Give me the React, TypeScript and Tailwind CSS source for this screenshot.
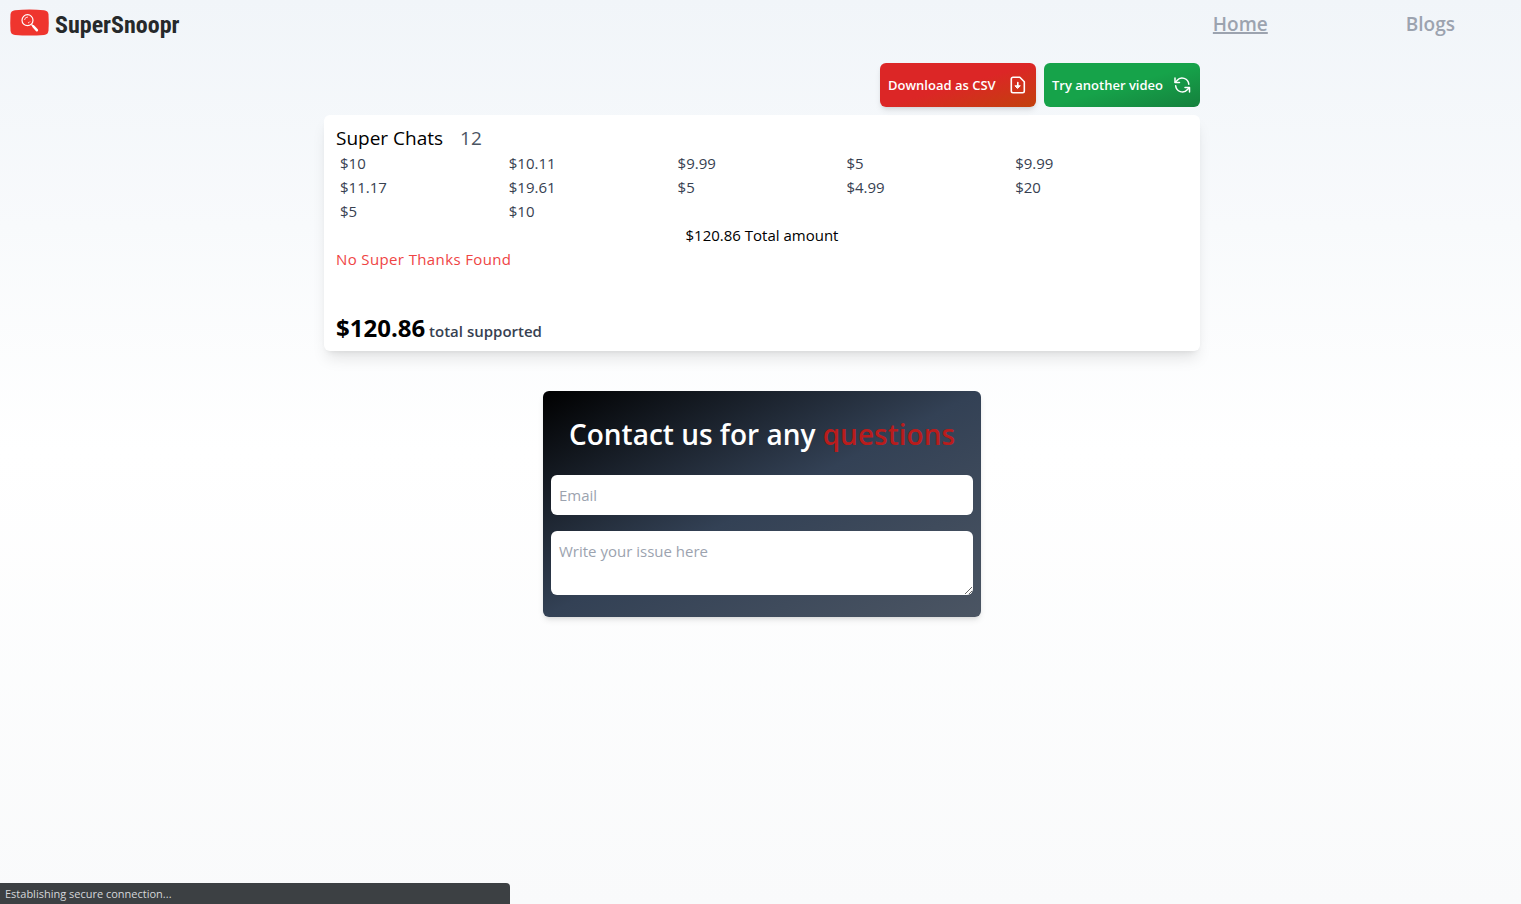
const superChats = ['$10', '$10.11', '$9.99', '$5', '$9.99', '$11.17', '$19.61', '$5', '$4.99', '$20', '$5', '$10'];

function Logo() {
  return (
    <a href="#" className="flex items-center gap-1.5">
      <svg width="39" height="36" viewBox="0 0 39 36" fill="none" aria-hidden="true">
        <path d="M5 4.2Q19.5 3 34 4.2Q38.2 4.6 38.5 8.5Q39 16.5 38.5 24.5Q38.2 28.5 34 29Q19.5 30 5 29Q.8 28.5 .5 24.5Q0 16.5 .5 8.5Q.8 4.6 5 4.2Z" fill="#ef352e" />
        <circle cx="17.5" cy="14.2" r="5.5" stroke="#fff" strokeWidth="1.2" />
        <path d="M14.5 14a3.5 3.5 0 0 1 3.5-3M20 15.5a3.5 3.5 0 0 1-2 1.5" stroke="#fff" strokeWidth=".8" />
        <path d="M21.5 18.5L23.5 20.5" stroke="#fff" strokeWidth="1.4" />
        <path d="M23.5 20.5L26.8 24.2" stroke="#fff" strokeWidth="2.6" strokeLinecap="round" />
      </svg>
      <span className="pt-0.5 font-['Roboto_Condensed','Lato',sans-serif] text-2xl font-bold text-[#26292b]">
        SuperSnoopr
      </span>
    </a>
  );
}

function DownloadIcon() {
  return (
    <svg width="20" height="20" viewBox="0 0 20 20" fill="none" stroke="currentColor" strokeWidth="1.6" strokeLinecap="round" strokeLinejoin="round" aria-hidden="true">
      <path d="M5 2.3h6.8L16.3 6.8V16a1.7 1.7 0 0 1-1.7 1.7H5A1.7 1.7 0 0 1 3.3 16V4A1.7 1.7 0 0 1 5 2.3z" />
      <path d="M9.8 7.5v4" />
      <path d="M7.3 10.8h5L9.8 13.3z" fill="currentColor" strokeWidth="1" />
    </svg>
  );
}

function RefreshIcon() {
  return (
    <svg width="20" height="20" viewBox="0 0 20 20" fill="none" stroke="currentColor" strokeWidth="1.5" strokeLinecap="round" strokeLinejoin="round" aria-hidden="true">
      <path d="M3 3v4.500h4.500" />
      <path d="M3.3 7.300L5 5.400A6.700 6.700 0 0 1 16.800 9.200" />
      <path d="M17.5 17v-4.500H13" />
      <path d="M17.2 12.700L15.500 14.600A6.700 6.700 0 0 1 3.700 10.800" />
    </svg>
  );
}

export default function App() {
  return (
    <div className="min-h-screen bg-linear-to-b/srgb from-[#f1f5f9] via-white to-[#f9fafb] font-['Open_Sans',sans-serif] text-[15px] leading-6 text-black">
      <header className="flex h-12 items-center justify-between pr-[66px] pl-2.5">
        <Logo />
        <nav className="flex gap-[138px] text-[19px] font-semibold text-[#9ca3af]">
          <a href="#" className="underline decoration-2">Home</a>
          <a href="#">Blogs</a>
        </nav>
      </header>

      <main className="mt-[15px] pl-[3px]">
        <div className="mx-auto w-full max-w-[876px]">
          <div className="mb-2 flex justify-end gap-2 text-[13px] font-semibold text-white">
            <button className="flex h-11 min-w-[156px] items-center justify-between gap-2 rounded-md bg-linear-to-br/srgb from-[#dc2626] via-[#dc2626] to-[#c2410c] px-2 shadow-md">
              Download as CSV
              <DownloadIcon />
            </button>
            <button className="flex h-11 min-w-[156px] items-center justify-between gap-2 rounded-md bg-linear-to-br/srgb from-[#16a34a] via-[#16a34a] to-[#15803d] px-2">
              Try another video
              <RefreshIcon />
            </button>
          </div>

          <section className="rounded-md bg-white px-3 pt-2 pb-[7px] shadow-lg">
            <h2 className="pt-0.5 text-[19px] leading-[26px] font-medium">
              Super Chats <span className="ml-3 font-normal text-[#4b5563]">12</span>
            </h2>
            <ul className="grid grid-cols-5 px-1 text-[#374151]">
              {superChats.map((amount, index) => (
                <li key={index}>{amount}</li>
              ))}
            </ul>
            <p className="text-center font-medium">$120.86 Total amount</p>
            <p className="tracking-wide text-[#ef4444]">No Super Thanks Found</p>
            <p className="mt-[41px] text-2xl font-bold">
              $120.86<span className="text-[15px] font-semibold text-[#374151]"> total supported</span>
            </p>
          </section>

          {/* Contact form */}
          <form className="mx-auto mt-10 w-1/2 rounded-md bg-linear-to-br/srgb from-black via-[#334155] to-[#4b5563] px-2 pt-[25px] pb-[22px] shadow-md">
            <h2 className="mb-[23px] text-center text-[28px] leading-9 font-semibold text-white">
              Contact us for any <span className="text-[#b91c1c]">questions</span>
            </h2>
            <input type="email" aria-label="Email" placeholder="Email" className="mb-4 block h-10 w-full rounded-md bg-white p-2 placeholder:text-[#9ca3af]" />
            <textarea aria-label="Write your issue here" placeholder="Write your issue here" rows={2} className="block h-16 w-full rounded-md bg-white p-2 placeholder:text-[#9ca3af]" />
          </form>
        </div>
      </main>

      <div role="status" className="fixed bottom-0 left-0 h-[21px] w-[510px] rounded-tr bg-[#3c4043] px-[5px] text-[11px] leading-[22px] text-[#d5d7da]">
        Establishing secure connection...
      </div>
    </div>
  );
}
